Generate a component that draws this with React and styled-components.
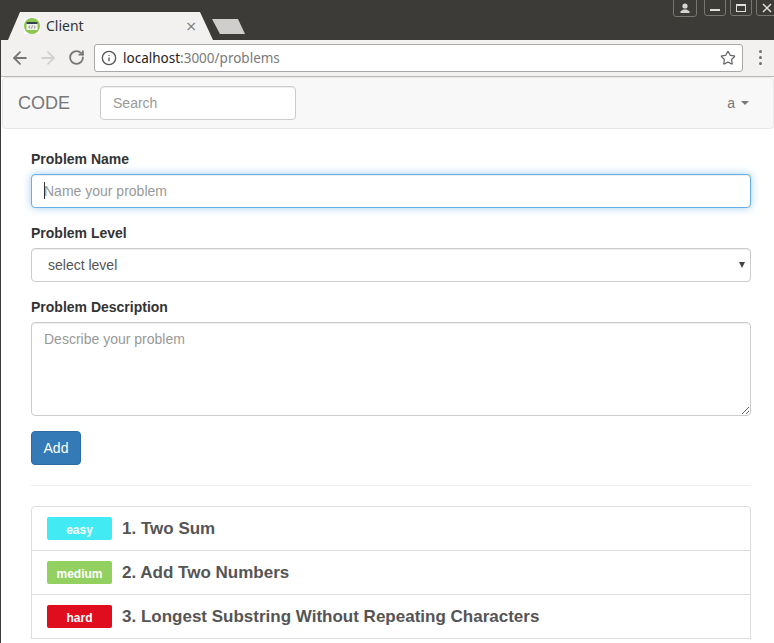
import React from "react";
import styled, {createGlobalStyle} from "styled-components";
import {ArrowLeft, ArrowRight, RotateCw, Info, Star} from "lucide-react";

const GlobalStyle = createGlobalStyle`
    html, body {
        margin: 0;
        height: 643px;
        overflow: hidden;
        background: #fff;
    }
    * {
        box-sizing: border-box;
    }
`;

const Page = styled.div`
    width: 774px;
    height: 643px;
    overflow: hidden;
    font-family: "Liberation Sans", Arial, sans-serif;
    font-size: 14px;
    line-height: 20px;
    color: #333;
    border-left: 1px solid #3c3b37;
`;

const TitleBar = styled.div`
    height: 40px;
    margin-left: -1px;
    background: #3c3b37;
    display: flex;
    align-items: flex-end;
    padding-left: 8px;
    position: relative;
`;

const ActiveTab = styled.div`
    width: 205px;
    height: 28px;
    background: #f2f1f0;
    clip-path: polygon(0 100%, 12px 0, 192px 0, 100% 100%);
    display: flex;
    align-items: center;
    padding: 0 8px 0 16px;
    font-family: "Noto Sans", "Open Sans", sans-serif;
    font-size: 14px;
    color: #2e3436;
`;

const TabTitle = styled.span`
    margin-left: 6px;
    flex: 1;
`;

const TabClose = styled.span`
    font-size: 14px;
    color: #777;
    margin-right: 8px;
    font-family: "DejaVu Sans", sans-serif;
`;

const NewTab = styled.div`
    width: 33px;
    height: 15px;
    margin: 0 0 6px -1px;
    background: #cfcecd;
    clip-path: polygon(8px 100%, 0 0, 26px 0, 100% 100%);
`;

const WindowControls = styled.div`
    position: absolute;
    top: -1px;
    right: -4px;
    display: flex;
    gap: 4px;
`;

const WindowButton = styled.div`
    width: ${props => props.wide ? 24 : 22}px;
    height: ${props => props.wide ? 18 : 17}px;
    margin-right: ${props => props.wide ? 3 : 0}px;
    border: 1px solid #77766f;
    border-radius: 0 0 3px 3px;
    display: flex;
    align-items: center;
    justify-content: center;
`;

const Toolbar = styled.div`
    height: 37px;
    margin-left: -1px;
    background: #f2f1f0;
    border-bottom: 1px solid #b9b8b6;
    display: flex;
    align-items: center;
    padding: 0 0 1px 6px;
    color: #777;
`;

const NavIcons = styled.div`
    display: flex;
    align-items: center;
    margin-right: 4px;
`;

const NavIcon = styled.span`
    width: 28px;
    display: flex;
    justify-content: center;
`;

const AddressBar = styled.div`
    width: 649px;
    height: 28px;
    background: #fff;
    border: 1px solid #a9a8a6;
    border-radius: 3px;
    display: flex;
    align-items: center;
    padding: 0 6px 0 6px;
    font-family: "Noto Sans", "Open Sans", sans-serif;
    font-size: 13.5px;
`;

const UrlHost = styled.span`
    color: #222;
    margin-left: 6px;
`;

const UrlPath = styled.span`
    color: #7a7a7a;
    flex: 1;
`;

const MenuDots = styled.div`
    margin-left: 16px;
    display: grid;
    gap: 3px;
`;

const MenuDot = styled.span`
    width: 3px;
    height: 3px;
    background: #6f6f6f;
    border-radius: 50%;
`;

const Navbar = styled.nav`
    height: 52px;
    margin: 0 0 20px 1px;
    background: #f8f8f8;
    border: 1px solid #e7e7e7;
    border-radius: 4px;
    display: flex;
    align-items: center;
    padding: 0 24px 0 15px;
`;

const Brand = styled.a`
    font-size: 18px;
    color: #777;
    margin-right: 30px;
`;

const SearchInput = styled.input`
    width: 196px;
    height: 34px;
    padding: 6px 12px;
    font: inherit;
    color: #555;
    background: #fff;
    border: 1px solid #ccc;
    border-radius: 4px;
    box-shadow: inset 0 1px 1px rgba(0, 0, 0, .075);
    &::placeholder {
        color: #999;
        opacity: 1;
    }
`;

const UserMenu = styled.div`
    margin-left: auto;
    color: #777;
    display: flex;
    align-items: center;
    gap: 6px;
`;

const Caret = styled.span`
    width: 0;
    height: 0;
    border-top: 4px solid #777;
    border-left: 4px solid transparent;
    border-right: 4px solid transparent;
`;

const Content = styled.div`
    padding: 0 23px 0 30px;
`;

const FormGroup = styled.div`
    margin-bottom: 15px;
    position: relative;
`;

const Label = styled.label`
    display: block;
    font-weight: bold;
    margin-bottom: 5px;
`;

const TextInput = styled.input`
    display: block;
    width: 100%;
    height: 34px;
    padding: 6px 12px;
    font: inherit;
    color: #555;
    background: #fff;
    border: 1px solid ${props => props.focused ? "#66afe9" : "#ccc"};
    border-radius: 4px;
    outline: none;
    box-shadow: inset 0 1px 1px rgba(0, 0, 0, .075)${props => props.focused ? ", 0 0 8px rgba(102, 175, 233, .6)" : ""};
    &::placeholder {
        color: #999;
        opacity: 1;
    }
`;

const TextCaret = styled.span`
    position: absolute;
    left: 13px;
    top: 33px;
    width: 1px;
    height: 17px;
    background: #333;
`;

const SelectWrap = styled.div`
    position: relative;
    &::after {
        content: "";
        position: absolute;
        right: 6px;
        top: 14px;
        border-top: 6px solid #444;
        border-left: 3px solid transparent;
        border-right: 3px solid transparent;
    }
`;

const LevelSelect = styled.select`
    display: block;
    width: 100%;
    height: 34px;
    padding: 6px 12px 6px 16px;
    appearance: none;
    font: inherit;
    color: #555;
    background: #fff;
    border: 1px solid #ccc;
    border-radius: 4px;
    box-shadow: inset 0 1px 1px rgba(0, 0, 0, .075);
`;

const DescriptionArea = styled.textarea`
    display: block;
    width: 100%;
    height: 94px;
    padding: 6px 12px;
    font: inherit;
    color: #555;
    background: #fff;
    border: 1px solid #ccc;
    border-radius: 4px;
    box-shadow: inset 0 1px 1px rgba(0, 0, 0, .075);
    &::placeholder {
        color: #999;
        opacity: 1;
    }
`;

const AddButton = styled.button`
    display: block;
    width: 50px;
    height: 34px;
    padding: 6px 0;
    font: inherit;
    color: #fff;
    background: #337ab7;
    border: 1px solid #2e6da4;
    border-radius: 4px;
`;

const Divider = styled.hr`
    margin: 20px 0;
    border: 0;
    border-top: 1px solid #eee;
`;

const ProblemList = styled.ul`
    list-style: none;
    margin: 0;
    padding: 0;
`;

const ProblemRow = styled.li`
    height: 45px;
    margin-bottom: -1px;
    padding: 10px 15px;
    background: #fff;
    border: 1px solid #ddd;
    display: flex;
    align-items: center;
    &:first-child {
        border-top-left-radius: 4px;
        border-top-right-radius: 4px;
    }
`;

const LEVEL_COLORS = {
    easy: "#42ebf4",
    medium: "#92d05f",
    hard: "#e00d1e",
};

const LevelBadge = styled.span`
    width: 65px;
    height: 23px;
    margin-right: 10px;
    border-radius: 2px;
    background: ${props => LEVEL_COLORS[props.level]};
    color: #fff;
    font-size: 12px;
    font-weight: bold;
    line-height: 26px;
    text-align: center;
`;

const ProblemTitle = styled.span`
    font-size: 17px;
    font-weight: bold;
    color: #555;
`;

const problems = [
    {id: 1, name: "Two Sum", level: "easy"},
    {id: 2, name: "Add Two Numbers", level: "medium"},
    {id: 3, name: "Longest Substring Without Repeating Characters", level: "hard"},
];

function Favicon() {
    return (
        <svg width="16" height="16" viewBox="0 0 16 16">
            <rect width="16" height="16" fill="#fff"/>
            <circle cx="8" cy="8" r="8" fill="#8cc64f"/>
            <rect x="2.5" y="4" width="11" height="8" fill="#eef2ea"/>
            <rect x="2.5" y="4" width="11" height="2" fill="#33414e"/>
            <path d="M6 7.5 4.8 9 6 10.5M10 7.5 11.2 9 10 10.5M8.6 7.5 7.4 10.5" fill="none" stroke="#666" strokeWidth=".7"/>
        </svg>
    );
}

function ChromeFrame() {
    return (
        <>
            <TitleBar>
                <ActiveTab>
                    <Favicon/>
                    <TabTitle>Client</TabTitle>
                    <TabClose>×</TabClose>
                </ActiveTab>
                <NewTab/>
                <WindowControls>
                    <WindowButton wide>
                        <svg width="12" height="11" viewBox="0 0 12 11">
                            <circle cx="6" cy="3" r="2.6" fill="#d6d5d1"/>
                            <path d="M1.5 10V8.2L4.5 6.6h3l3 1.6V10z" fill="#d6d5d1"/>
                        </svg>
                    </WindowButton>
                    <WindowButton>
                        <svg width="10" height="8" viewBox="0 0 10 8">
                            <rect y="5" width="10" height="2" fill="#e0dfdb"/>
                        </svg>
                    </WindowButton>
                    <WindowButton>
                        <svg width="10" height="8" viewBox="0 0 10 8">
                            <rect x=".5" y=".5" width="9" height="7" fill="none" stroke="#e0dfdb"/>
                            <rect width="10" height="2" fill="#e0dfdb"/>
                        </svg>
                    </WindowButton>
                    <WindowButton>
                        <svg width="10" height="10" viewBox="0 0 10 10">
                            <path d="M1 1 9 9M9 1 1 9" stroke="#e0dfdb" strokeWidth="1.5"/>
                        </svg>
                    </WindowButton>
                </WindowControls>
            </TitleBar>
            <Toolbar>
                <NavIcons>
                    <NavIcon><ArrowLeft size={20} strokeWidth={2.2}/></NavIcon>
                    <NavIcon><ArrowRight size={20} strokeWidth={2.2} color="#d2d1cf"/></NavIcon>
                    <NavIcon><RotateCw size={17} strokeWidth={2.6}/></NavIcon>
                </NavIcons>
                <AddressBar>
                    <Info size={16} color="#555" strokeWidth={2}/>
                    <UrlHost>localhost</UrlHost>
                    <UrlPath>:3000/problems</UrlPath>
                    <Star size={16} color="#666" strokeWidth={1.8}/>
                </AddressBar>
                <MenuDots>
                    <MenuDot/>
                    <MenuDot/>
                    <MenuDot/>
                </MenuDots>
            </Toolbar>
        </>
    );
}

export default function App() {
    return (
        <Page>
            <GlobalStyle/>
            <ChromeFrame/>
            <Navbar>
                <Brand>CODE</Brand>
                <SearchInput placeholder="Search"/>
                <UserMenu>a <Caret/></UserMenu>
            </Navbar>
            <Content>
                <FormGroup>
                    <Label>Problem Name</Label>
                    <TextInput focused placeholder="Name your problem"/>
                    <TextCaret/>
                </FormGroup>
                <FormGroup>
                    <Label>Problem Level</Label>
                    <SelectWrap>
                        <LevelSelect defaultValue="">
                            <option value="">select level</option>
                            <option value="easy">easy</option>
                            <option value="medium">medium</option>
                            <option value="hard">hard</option>
                        </LevelSelect>
                    </SelectWrap>
                </FormGroup>
                <FormGroup>
                    <Label>Problem Description</Label>
                    <DescriptionArea placeholder="Describe your problem"/>
                </FormGroup>
                <AddButton>Add</AddButton>
                <Divider/>
                <ProblemList>
                    {problems.map(problem => (
                        <ProblemRow key={problem.id}>
                            <LevelBadge level={problem.level}>{problem.level}</LevelBadge>
                            <ProblemTitle>{problem.id}. {problem.name}</ProblemTitle>
                        </ProblemRow>
                    ))}
                </ProblemList>
            </Content>
        </Page>
    );
}
